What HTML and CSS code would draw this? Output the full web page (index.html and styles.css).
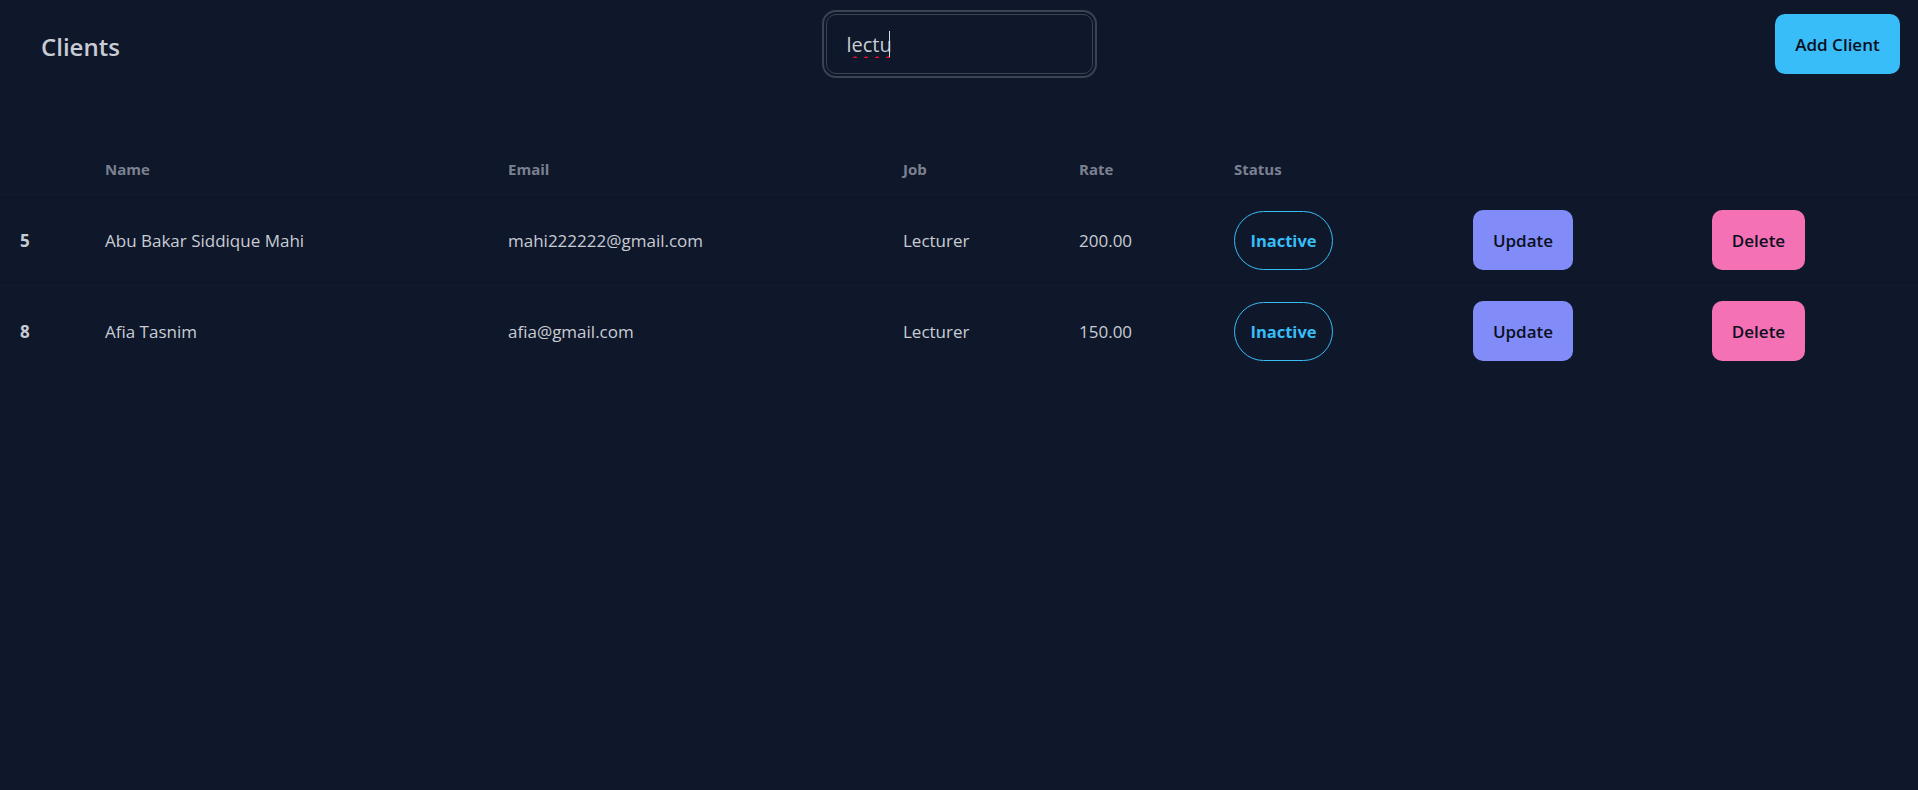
FILE: index.html
```html
<!DOCTYPE html>
<html lang="en">
<head>
<meta charset="utf-8">
<title>Clients</title>
<link rel="stylesheet" href="styles.css">
</head>
<body>
<header class="navbar">
  <div class="nav-start"><span class="brand">Clients</span></div>
  <div class="nav-center">
    <div class="search-wrap">
      <input class="search" type="text" value="lectu" spellcheck="true">
      <span class="caret"></span>
    </div>
  </div>
  <div class="nav-end"><button class="btn btn-primary">Add Client</button></div>
</header>
<main class="table-wrap">
  <table class="table">
    <colgroup>
      <col class="c-id"><col class="c-name"><col class="c-email"><col class="c-job"><col class="c-rate"><col class="c-status"><col class="c-update"><col class="c-delete">
    </colgroup>
    <thead>
      <tr><th></th><th>Name</th><th>Email</th><th>Job</th><th>Rate</th><th>Status</th><th></th><th></th></tr>
    </thead>
    <tbody>
      <tr>
        <th>5</th><td>Abu Bakar Siddique Mahi</td><td>mahi222222@gmail.com</td><td>Lecturer</td><td>200.00</td>
        <td><span class="badge">Inactive</span></td>
        <td><button class="btn btn-secondary">Update</button></td>
        <td><button class="btn btn-accent">Delete</button></td>
      </tr>
      <tr>
        <th>8</th><td>Afia Tasnim</td><td>afia@gmail.com</td><td>Lecturer</td><td>150.00</td>
        <td><span class="badge">Inactive</span></td>
        <td><button class="btn btn-secondary">Update</button></td>
        <td><button class="btn btn-accent">Delete</button></td>
      </tr>
    </tbody>
  </table>
</main>
</body>
</html>
```
FILE: styles.css
```css
* { box-sizing: border-box; }
html, body { margin: 0; padding: 0; }
body {
  background: #0f172a;
  color: #c8ccd4;
  font-family: "Open Sans", "Noto Sans", sans-serif;
  min-height: 790px;
}
.navbar {
  display: grid;
  grid-template-columns: 1fr auto 1fr;
  align-items: center;
  padding: 14px 18px 0 18px;
  height: 74px;
}
.nav-start { display: flex; align-items: center; padding-left: 23px; height: 60px; }
.nav-end { display: flex; justify-content: flex-end; }
.brand {
  font-size: 24px;
  font-weight: 600;
  color: #c8ccd4;
  line-height: 30px;
  margin-top: 5px;
}
.search-wrap { position: relative; width: 267px; height: 60px; }
.search {
  display: block;
  width: 267px;
  height: 60px;
  background: #0f172a;
  border: 1px solid #3a4354;
  border-radius: 10px;
  outline: 2px solid #3a4354;
  outline-offset: 2px;
  padding: 0 20px;
  color: #c8ccd4;
  font-family: inherit;
  font-size: 20px;
  text-decoration: underline wavy #e0102a;
  text-decoration-thickness: 1.5px;
  text-underline-offset: 4px;
}
.caret {
  position: absolute;
  left: 63px;
  top: 17px;
  width: 1px;
  height: 26px;
  background: #d8dbe2;
}
.btn {
  height: 60px;
  border: none;
  border-radius: 10px;
  padding: 0;
  font-family: inherit;
  font-size: 17px;
  font-weight: 600;
  color: #0b0f1e;
  cursor: pointer;
}
.btn-primary { background: #38bdf8; width: 125px; }
.btn-secondary { background: #818cf8; width: 100px; }
.btn-accent { background: #f471b5; width: 93px; }
.table-wrap { margin-top: 70px; }
.table {
  width: 1918px;
  table-layout: fixed;
  border-collapse: collapse;
  text-align: left;
}
.c-id { width: 85px; }
.c-name { width: 403px; }
.c-email { width: 395px; }
.c-job { width: 176px; }
.c-rate { width: 155px; }
.c-status { width: 239px; }
.c-update { width: 239px; }
.c-delete { width: 226px; }
.table th, .table td {
  padding: 15px 20px;
  vertical-align: middle;
}
.table thead th {
  font-size: 15px;
  font-weight: 700;
  color: #7b8190;
  line-height: 20px;
}
.table thead tr { border-bottom: 1px solid #131b2f; }
.table tbody tr { border-bottom: 1px solid #131b2f; }
.table tbody tr:last-child { border-bottom: none; }
.table tbody th {
  font-size: 17px;
  font-weight: 700;
  color: #c8ccd4;
}
.table td {
  font-size: 17px;
  line-height: 25px;
  color: #c8ccd4;
}
.badge {
  display: inline-flex;
  align-items: center;
  justify-content: center;
  width: 99px;
  height: 59px;
  border: 1px solid #38bdf8;
  border-radius: 30px;
  color: #38bdf8;
  font-weight: 700;
  font-size: 16.5px;
}
```
